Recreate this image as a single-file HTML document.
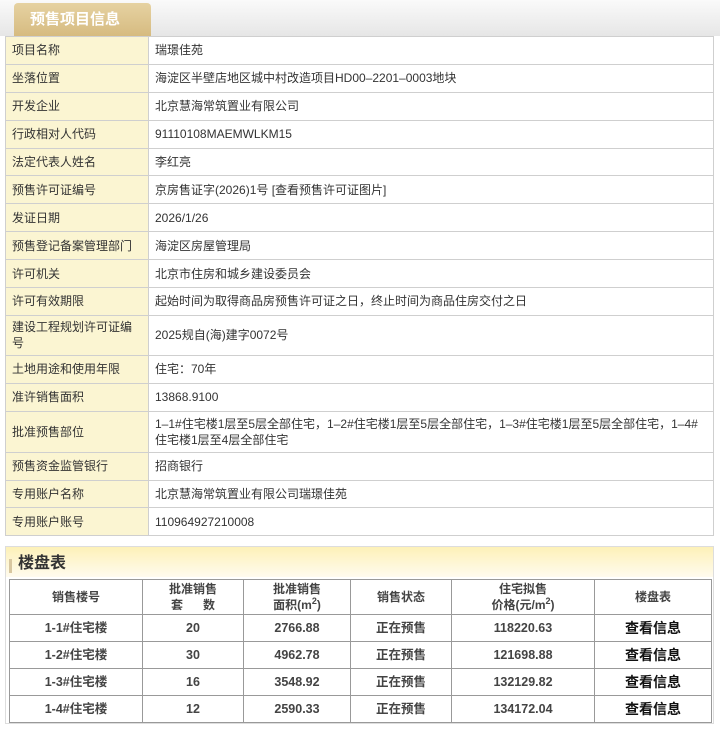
<!DOCTYPE html>
<html><head><meta charset="utf-8"><style>
*{box-sizing:border-box;margin:0;padding:0}
body{width:720px;height:731px;background:#fff;font-family:"Liberation Sans","Noto Sans CJK SC",sans-serif;color:#333;position:relative;overflow:hidden}
.top{position:absolute;left:0;top:0;width:720px;height:36px;background:linear-gradient(#fafafa,#e6e6e6)}
.tab{position:absolute;left:14px;top:3px;width:137px;height:33px;background:linear-gradient(#e6d2a2,#d6bb80);border-radius:4px 4px 0 0;color:#fff;font-weight:bold;font-size:15px;line-height:34px;padding-left:16px}
table{border-collapse:collapse}
.t1{position:absolute;left:5px;top:36px;width:709px;font-size:12px}
.t1 td{border:1px solid #cfcfcf;height:27.9px;padding:0 6px;line-height:16px}
.t1 td.l{background:#fbf5d2;width:143px}
.box{position:absolute;left:5px;top:546px;width:709px;height:178px;border:1px solid #ddd;background:#fff}
.bh{height:30px;background:linear-gradient(#fdf1b8,#fffbee);font-weight:bold;font-size:16px;color:#333;line-height:34px;padding-left:12px;position:relative}
.bh:before{content:"";position:absolute;left:3px;top:12px;width:3px;height:14px;background:#d8c7a0}
.t2{position:absolute;left:3px;top:32px;width:703px;font-size:12.5px;font-weight:bold;color:#444;text-align:center}
.t2 td{border:1px solid #999;height:27px;line-height:15px}
.t2 tr.h td{height:35px;font-size:12px;line-height:16px}
.t2 sup{font-size:9px;line-height:0}
.t2 .v{font-size:14px;color:#111}
</style></head><body>
<div class="top"><div class="tab">预售项目信息</div></div>
<table class="t1">
<tr><td class="l">项目名称</td><td>瑞璟佳苑</td></tr>
<tr><td class="l">坐落位置</td><td>海淀区半壁店地区城中村改造项目HD00–2201–0003地块</td></tr>
<tr><td class="l">开发企业</td><td>北京慧海常筑置业有限公司</td></tr>
<tr><td class="l">行政相对人代码</td><td>91110108MAEMWLKM15</td></tr>
<tr><td class="l">法定代表人姓名</td><td>李红亮</td></tr>
<tr><td class="l">预售许可证编号</td><td>京房售证字(2026)1号 [查看预售许可证图片]</td></tr>
<tr><td class="l">发证日期</td><td>2026/1/26</td></tr>
<tr><td class="l">预售登记备案管理部门</td><td>海淀区房屋管理局</td></tr>
<tr><td class="l">许可机关</td><td>北京市住房和城乡建设委员会</td></tr>
<tr><td class="l">许可有效期限</td><td>起始时间为取得商品房预售许可证之日，终止时间为商品住房交付之日</td></tr>
<tr><td class="l" style="height:40px">建设工程规划许可证编号</td><td>2025规自(海)建字0072号</td></tr>
<tr><td class="l">土地用途和使用年限</td><td>住宅：70年</td></tr>
<tr><td class="l">准许销售面积</td><td>13868.9100</td></tr>
<tr><td class="l" style="height:41px">批准预售部位</td><td>1–1#住宅楼1层至5层全部住宅，1–2#住宅楼1层至5层全部住宅，1–3#住宅楼1层至5层全部住宅，1–4#住宅楼1层至4层全部住宅</td></tr>
<tr><td class="l">预售资金监管银行</td><td>招商银行</td></tr>
<tr><td class="l">专用账户名称</td><td>北京慧海常筑置业有限公司瑞璟佳苑</td></tr>
<tr><td class="l">专用账户账号</td><td>110964927210008</td></tr>
</table>
<div class="box"><div class="bh">楼盘表</div>
<table class="t2">
<tr class="h"><td style="width:133px">销售楼号</td><td style="width:101px">批准销售<br>套&nbsp;&nbsp;&nbsp;&nbsp;&nbsp;&nbsp;数</td><td style="width:107px">批准销售<br>面积(m<sup>2</sup>)</td><td style="width:101px">销售状态</td><td style="width:143px">住宅拟售<br>价格(元/m<sup>2</sup>)</td><td>楼盘表</td></tr>
<tr><td>1-1#住宅楼</td><td>20</td><td>2766.88</td><td>正在预售</td><td>118220.63</td><td class="v">查看信息</td></tr>
<tr><td>1-2#住宅楼</td><td>30</td><td>4962.78</td><td>正在预售</td><td>121698.88</td><td class="v">查看信息</td></tr>
<tr><td>1-3#住宅楼</td><td>16</td><td>3548.92</td><td>正在预售</td><td>132129.82</td><td class="v">查看信息</td></tr>
<tr><td>1-4#住宅楼</td><td>12</td><td>2590.33</td><td>正在预售</td><td>134172.04</td><td class="v">查看信息</td></tr>
</table></div>
</body></html>
